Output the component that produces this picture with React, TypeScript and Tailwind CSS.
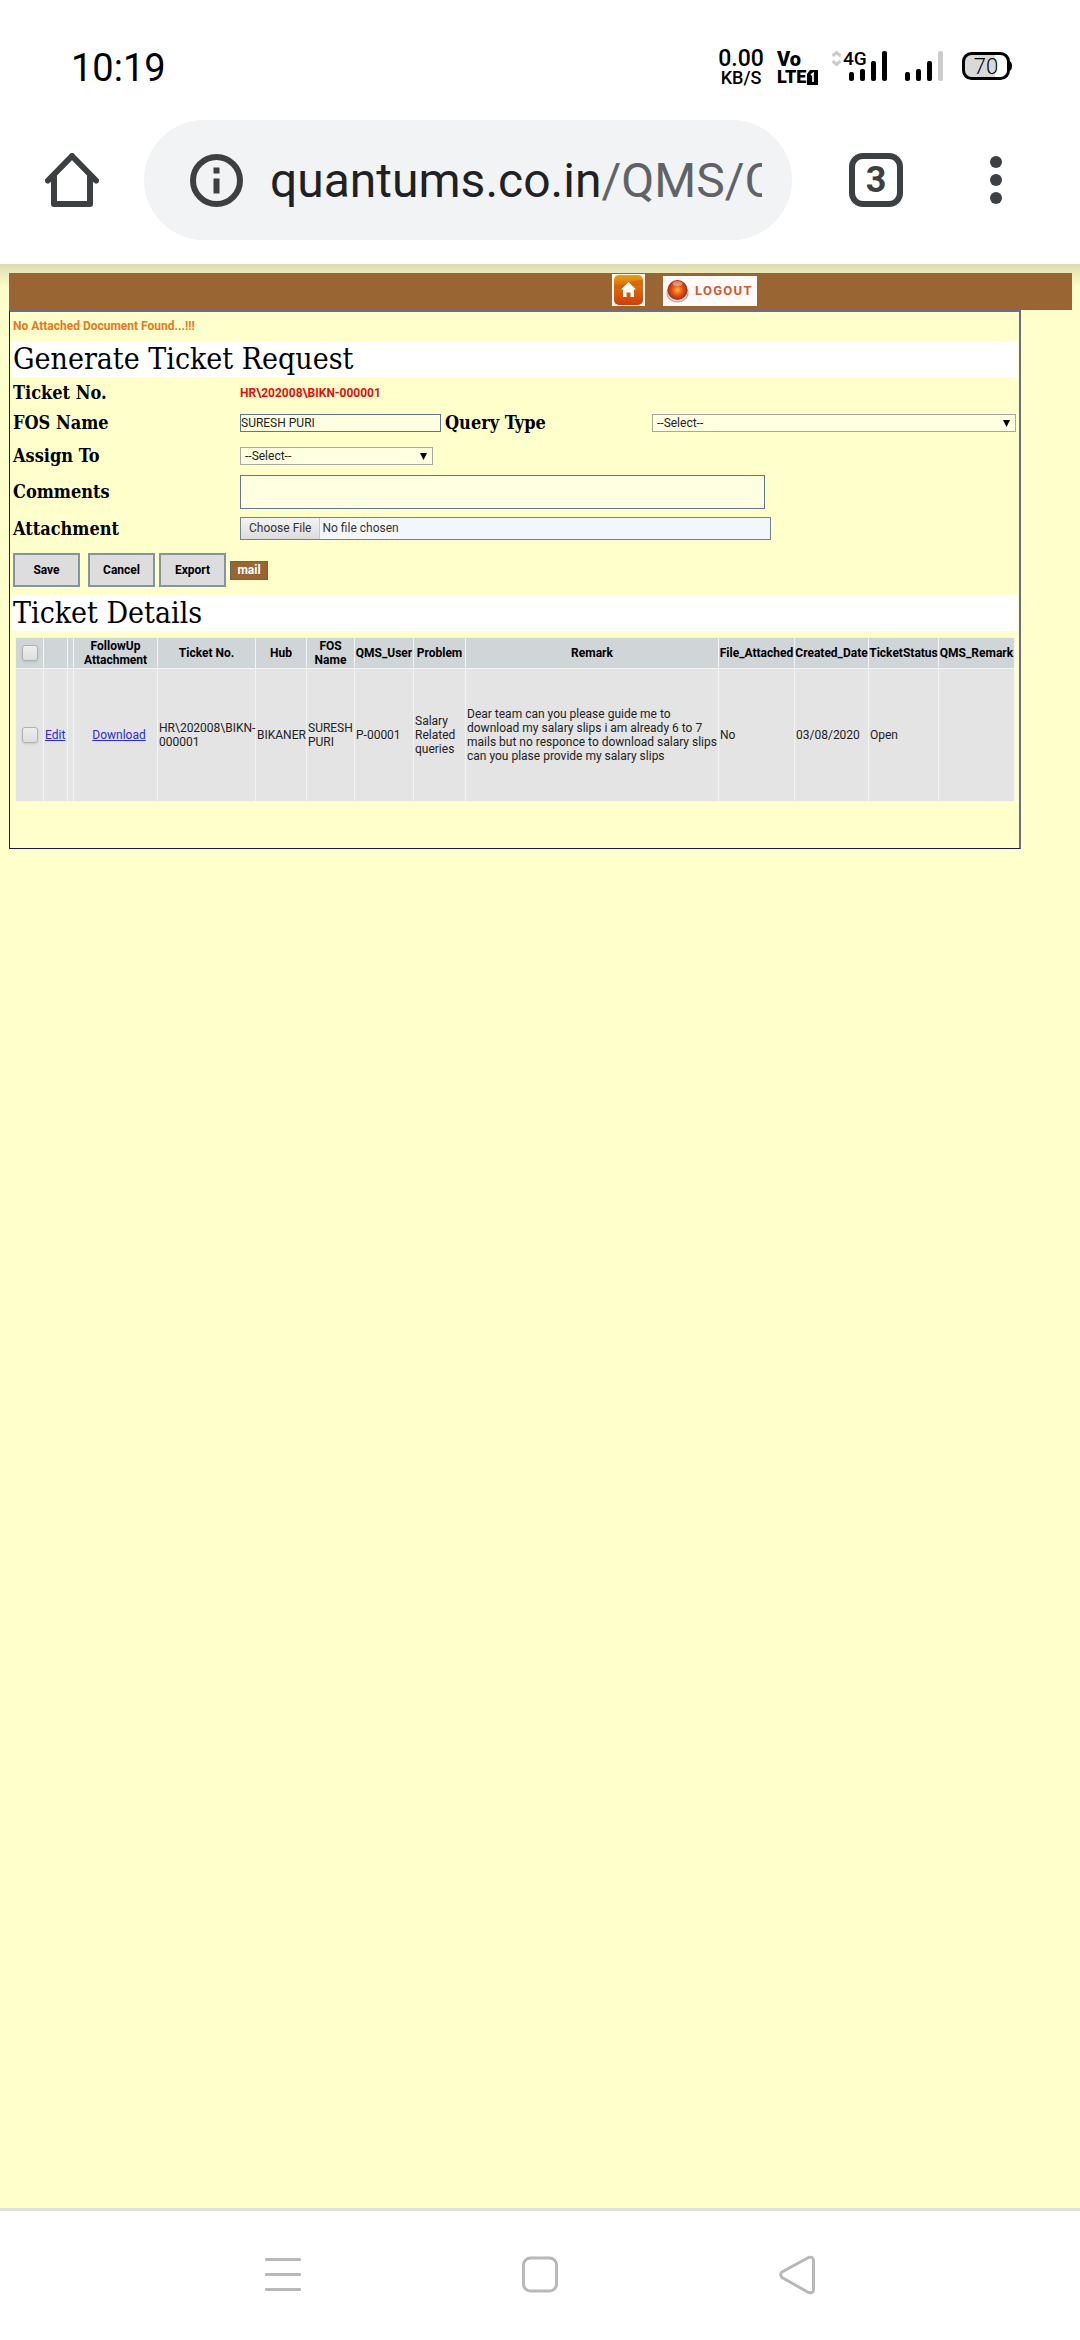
import type { ReactNode } from "react";

const serif = "font-['DejaVu_Serif_Condensed','Noto_Serif','DejaVu_Serif',serif]";
const field = "border border-[#5f7888] bg-[#ffffe1] text-xs text-[#222222] outline-none";

function StatusBar() {
  return (
    <header className="flex h-24 items-end justify-between bg-white pr-[68px] pb-[10px] pl-[71px] text-black">
      <time className="text-[38px] leading-[36px]">10:19</time>
      <div className="flex h-10 items-stretch">
        <div className="flex w-12 flex-col items-center pt-0.5 font-medium">
          <span className="text-[23px] leading-[21px]">0.00</span>
          <span className="text-[18px] leading-[17px]">KB/S</span>
        </div>
        <div className="ml-3 flex w-[43px] flex-col pt-[3px] font-black">
          <span className="text-[20px] leading-[20px]">Vo</span>
          <span className="flex items-center text-[18px] leading-[16px]">
            LTE
            <svg className="shrink-0" width="12" height="15" viewBox="0 0 12 15" aria-hidden="true">
              <path d="M4 0H12V15H1V4Z" fill="#000" />
              <path d="M5 5L7 3.5V12" fill="none" stroke="#fff" strokeWidth="1.7" />
            </svg>
          </span>
        </div>
        <svg className="ml-[11px]" width="57" height="36" viewBox="0 0 57 36" aria-hidden="true">
          <g fill="none" stroke="#cccccc" strokeWidth="3">
            <path d="M1.5 10L5.5 6.5L9.5 10" />
            <path d="M1.5 15L5.5 18.5L9.5 15" />
          </g>
          <text x="12" y="19" fontSize="19" fontWeight="500" fontFamily="Roboto">4G</text>
          <rect x="18" y="26" width="5" height="9" rx="2" />
          <rect x="29" y="23" width="5" height="12" rx="2" />
          <rect x="40" y="15" width="5" height="20" rx="2" />
          <rect x="51" y="5" width="5" height="30" rx="2" />
        </svg>
        <svg className="ml-[17px]" width="40" height="36" viewBox="0 0 40 36" aria-hidden="true">
          <rect x="0" y="26" width="5" height="9" rx="2" />
          <rect x="11" y="23" width="5" height="12" rx="2" />
          <rect x="22" y="15" width="5" height="20" rx="2" />
          <rect x="33" y="5" width="5" height="30" rx="2" fill="#cccccc" />
        </svg>
        <svg className="ml-[17px]" width="50" height="36" viewBox="0 0 50 36" aria-hidden="true">
          <path d="M11 7.5H33V32.5H11C5 32.5 1.5 29 1.5 24V16C1.5 11 5 7.5 11 7.5Z" fill="#d9d9d9" />
          <rect x="1.5" y="7.5" width="45" height="25" rx="8" fill="none" stroke="#000" strokeWidth="3" />
          <path d="M47 15C51 15 51 25 47 25Z" />
          <text x="24" y="28" fontSize="22" fontWeight="300" textAnchor="middle" fontFamily="Roboto">70</text>
        </svg>
      </div>
    </header>
  );
}

function Toolbar() {
  return (
    <nav className="flex h-[168px] items-center bg-white pr-12 pl-9">
      <button aria-label="Home" className="flex size-[72px] items-center justify-center">
        <svg width="54" height="54" viewBox="0 0 54 54" fill="none" stroke="#3c4043" strokeWidth="6" strokeLinejoin="round" strokeLinecap="round">
          <path d="M3 27.5L27 3L51 27.5" />
          <path d="M9 24V51H45V24" />
        </svg>
      </button>
      <div className="ml-9 flex h-[120px] min-w-0 flex-1 items-center rounded-full bg-[#f1f3f4] pr-[30px] pl-[46px]">
        <svg className="shrink-0" width="53" height="53" viewBox="0 0 53 53" aria-hidden="true">
          <circle cx="26.5" cy="26.5" r="23.5" fill="none" stroke="#3c4043" strokeWidth="6" />
          <path d="M23.5 13.5H29.5V19.5H23.5ZM23.5 24.5H29.5V39.5H23.5Z" fill="#3c4043" />
        </svg>
        <div className="ml-[27px] min-w-0 flex-1 overflow-hidden pt-0.5 text-[48px] leading-[60px] whitespace-nowrap text-[#202124]">
          quantums.co.in<span className="text-[#5f6368]">/QMS/C</span>
        </div>
      </div>
      <button aria-label="Open tabs" className="ml-12 flex size-[72px] items-center justify-center">
        <span className="flex size-[54px] items-center justify-center rounded-[14px] border-[6px] border-[#3c4043] text-[36px] leading-[42px] font-bold text-[#3c4043]">3</span>
      </button>
      <button aria-label="More options" className="ml-12 flex size-[72px] items-center justify-center">
        <svg width="12" height="48" viewBox="0 0 12 48" fill="#3c4043">
          <circle cx="6" cy="6" r="6" />
          <circle cx="6" cy="24" r="6" />
          <circle cx="6" cy="42" r="6" />
        </svg>
      </button>
    </nav>
  );
}

function SiteBar() {
  return (
    <div className="flex h-[37px] items-start border-t border-[#8a6a40] bg-[#996633] pl-[603px]">
      <a href="#home" aria-label="Home" className="flex h-8 w-[33px] items-center justify-center bg-[#fff8ee]">
        <svg width="29" height="30" viewBox="0 0 29 30">
          <defs>
            <linearGradient id="homeTile" x1="0" y1="0" x2="0" y2="1">
              <stop offset="0" stopColor="#e8a010" />
              <stop offset="0.35" stopColor="#dd7010" />
              <stop offset="1" stopColor="#cc3f0c" />
            </linearGradient>
          </defs>
          <rect width="29" height="30" rx="5" fill="url(#homeTile)" />
          <path d="M0 9C9 12 18 4 29 5V11C18 9 10 15 0 14Z" fill="#d05a08" opacity="0.5" />
          <path d="M14.5 7L22 14.5H20V22H16.5V17.5H12.5V22H9V14.5H7Z" fill="#fff" />
        </svg>
      </a>
      <a href="#logout" className="mt-0.5 ml-[18px] flex h-[30px] w-[94px] items-center bg-[#fdfaf8] pl-[3px]">
        <svg width="23" height="24" viewBox="0 0 23 24" aria-hidden="true">
          <defs>
            <radialGradient id="orb" cx="0.5" cy="0.5" r="0.5">
              <stop offset="0" stopColor="#ffb347" />
              <stop offset="0.5" stopColor="#e8581a" />
              <stop offset="1" stopColor="#a82a0c" />
            </radialGradient>
          </defs>
          <ellipse cx="11.5" cy="14" rx="11" ry="9.5" fill="#b9a6a0" />
          <ellipse cx="11.5" cy="13" rx="10" ry="9.5" fill="#e6dcd8" />
          <circle cx="11.5" cy="11" r="10" fill="url(#orb)" />
          <ellipse cx="11.5" cy="4.5" rx="5" ry="2.5" fill="#fff" opacity="0.4" />
        </svg>
        <span className="ml-1.5 text-[13px] leading-4 font-bold tracking-widest text-[#cf5a33]">LOGOUT</span>
      </a>
    </div>
  );
}

function SectionTitle({ children }: { children: ReactNode }) {
  return <h2 className={`${serif} h-9 bg-white px-px text-[30px] leading-9 text-black`}>{children}</h2>;
}

function Label({ htmlFor, children }: { htmlFor: string; children: ReactNode }) {
  return (
    <label htmlFor={htmlFor} className={`${serif} pl-px text-[18px] leading-6 font-bold text-black`}>
      {children}
    </label>
  );
}

function Select({ id, className }: { id: string; className: string }) {
  return (
    <div className={`relative ${className}`}>
      <select id={id} className="block h-[18px] w-full appearance-none border border-[#a8a8a0] bg-[#ffffe1] pl-1 text-xs leading-4 text-[#222222]">
        <option>--Select--</option>
      </select>
      <svg className="pointer-events-none absolute top-1.5 right-1.5" width="7" height="7" viewBox="0 0 7 7" aria-hidden="true">
        <path d="M0 0H7L3.5 7Z" />
      </svg>
    </div>
  );
}

function TicketForm() {
  return (
    <form onSubmit={(e) => e.preventDefault()}>
      <div className="grid grid-cols-[228px_1fr] grid-rows-[31px_30px_36px_36px_37px] items-center">
        <Label htmlFor="ticket">Ticket No.</Label>
        <output id="ticket" className="text-xs font-bold text-[#e01010]">HR\202008\BIKN-000001</output>
        <Label htmlFor="fos">FOS Name</Label>
        <div className="flex items-center">
          <input id="fos" defaultValue="SURESH PURI" className={`${field} h-[18px] w-[201px]`} />
          <div className="ml-[3px] w-[208px]">
            <Label htmlFor="query">Query Type</Label>
          </div>
          <Select id="query" className="mr-px flex-1" />
        </div>
        <Label htmlFor="assign">Assign To</Label>
        <Select id="assign" className="w-[193px]" />
        <Label htmlFor="comments">Comments</Label>
        <textarea id="comments" className={`${field} h-[34px] w-[525px] resize-none`} />
        <Label htmlFor="attachment">Attachment</Label>
        <input
          id="attachment"
          type="file"
          className="h-[23px] w-[531px] border border-[#6f8596] bg-[#f3f7fc] text-xs leading-[21px] text-[#333333] file:mr-0.5 file:h-[21px] file:border-r file:border-[#c8c8c8] file:bg-linear-to-b file:from-[#f4f4f4] file:to-[#dcdcdc] file:px-2 file:text-[#333333]"
        />
      </div>
      <div className="flex h-12 items-center pb-0.5 pl-px">
        {["Save", "Cancel", "Export"].map((name, i) => (
          <button key={name} className={`h-[34px] w-[67px] border-2 border-[#8495a0] bg-[#dddddd] text-xs font-bold text-black ${i === 0 ? "mr-2" : "mr-1"}`}>
            {name}
          </button>
        ))}
        <button className="h-[19px] w-[38px] border border-[#6b6455] bg-[#996633] text-xs leading-4 font-bold text-white">mail</button>
      </div>
    </form>
  );
}

function Check({ label }: { label: string }) {
  return (
    <input
      type="checkbox"
      aria-label={label}
      className="mx-auto block size-4 appearance-none rounded-[3px] border border-[#b0b0b0] bg-linear-to-b from-[#eeeeee] to-[#dedede] shadow-sm"
    />
  );
}

const columns: [ReactNode, string][] = [
  [<Check label="Select all" />, "w-[28px]"],
  ["", "w-[24px]"],
  ["", "w-[6px]"],
  ["FollowUp Attachment", "w-[84px]"],
  ["Ticket No.", "w-[98px]"],
  ["Hub", "w-[51px]"],
  ["FOS Name", "w-[48px]"],
  ["QMS_User", "w-[59px]"],
  ["Problem", "w-[52px]"],
  ["Remark", ""],
  ["File_Attached", "w-[76px]"],
  ["Created_Date", "w-[74px]"],
  ["TicketStatus", "w-[70px]"],
  ["QMS_Remark", "w-[76px]"],
];

const row: ReactNode[] = [
  <Check label="Select ticket" />,
  <a href="#edit" className="text-[#2a2ad0] underline">Edit</a>,
  "",
  <div className="pl-1.5 text-center">
    <a href="#download" className="text-[#2a2ad0] underline">Download</a>
  </div>,
  "HR\\202008\\BIKN-000001",
  "BIKANER",
  "SURESH PURI",
  "P-00001",
  "Salary Related queries",
  "Dear team can you please guide me to download my salary slips i am already 6 to 7 mails but no responce to download salary slips can you plase provide my salary slips",
  "No",
  "03/08/2020",
  "Open",
  "",
];

function TicketTable() {
  return (
    <div className="pt-1.5 pr-0.5 pl-[3px]">
      <table className="w-full table-fixed border-collapse border border-[#fafaf4] text-xs leading-[14px] text-[#222222]">
        <thead>
          <tr className="h-[31px] bg-[#d0d5d8] text-black">
            {columns.map(([title, width], i) => (
              <th key={i} scope="col" className={`border border-[#f4f4f4] p-0 text-center font-bold ${width}`}>
                {title}
              </th>
            ))}
          </tr>
        </thead>
        <tbody>
          <tr className="h-[133px] bg-[#e4e4e4]">
            {row.map((cell, i) => (
              <td key={i} className={`border border-[#f4f4f4] py-0 pr-0 align-middle ${i === 0 || i === 2 ? "pl-0" : "pl-px"}`}>
                {cell}
              </td>
            ))}
          </tr>
        </tbody>
      </table>
    </div>
  );
}

function NavBar() {
  return (
    <footer className="flex h-[132px] items-center justify-center gap-[221px] border-t-[3px] border-[#e0e0dc] bg-white pb-0.5">
      <button aria-label="Recent apps">
        <svg width="36" height="40" viewBox="0 0 36 40" fill="#b8b8b8">
          <rect y="3" width="36" height="3" rx="1" />
          <rect y="18" width="36" height="3" rx="1" />
          <rect y="33" width="36" height="3" rx="1" />
        </svg>
      </button>
      <button aria-label="Home screen">
        <svg width="36" height="40" viewBox="0 0 36 40" fill="none" stroke="#b8b8b8" strokeWidth="3">
          <rect x="1.5" y="3" width="33" height="33" rx="7" />
        </svg>
      </button>
      <button aria-label="Back">
        <svg width="36" height="40" viewBox="0 0 36 40" fill="none" stroke="#b8b8b8" strokeWidth="3" strokeLinejoin="round">
          <path d="M29.5 2.5L3 17Q0.5 19.5 3 22.5L29.5 37.5Q34.5 39 34.5 34V6Q34.5 1 29.5 2.5Z" />
        </svg>
      </button>
    </footer>
  );
}

export default function App() {
  return (
    <div className="flex min-h-screen flex-col bg-[#ffffcc] font-[Roboto,sans-serif]">
      <StatusBar />
      <Toolbar />
      <main className="flex-1 bg-linear-to-b from-[#dcdcb0] to-[#ffffcc] to-[24px] pt-[9px] pr-2 pl-[9px]">
        <SiteBar />
        <div className="mr-[51px] border-t-2 border-r-2 border-b border-l border-t-[#6c6c8c] border-r-[#6c6c80] border-b-[#1c1c44] border-l-[#1c1c44] bg-[#ffffcc] pr-0.5 pb-[46px] pl-0.5">
          <p className="h-[29px] pl-px text-xs leading-[29px] font-bold text-[#e87722]">No Attached Document Found...!!!</p>
          <SectionTitle>Generate Ticket Request</SectionTitle>
          <TicketForm />
          <SectionTitle>Ticket Details</SectionTitle>
          <TicketTable />
        </div>
      </main>
      <NavBar />
    </div>
  );
}
